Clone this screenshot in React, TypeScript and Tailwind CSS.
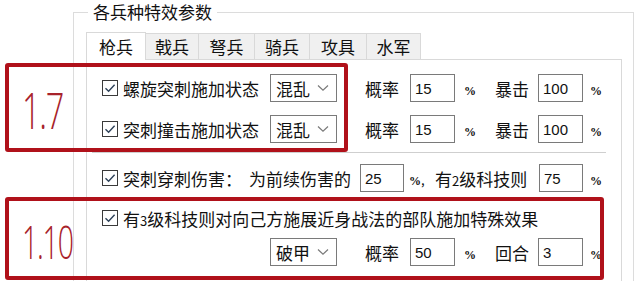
import React from "react";

const Check = () => (
  <span className="w-[16px] h-[16px] border border-[#3a3a3a] bg-white flex items-center justify-center shrink-0">
    <svg width="12" height="12" viewBox="0 0 12 12">
      <path d="M1.5 6.2 L4.6 9.2 L10.6 2.8" fill="none" stroke="#2d4058" strokeWidth="1.4" />
    </svg>
  </span>
);

const Combo = ({ value }: { value: string }) => (
  <div className="w-[67px] h-[28px] border border-[#7a7a7a] bg-white flex items-center justify-between pl-[5px] pr-[7px] shrink-0">
    <span>{value}</span>
    <svg width="12" height="8" viewBox="0 0 12 8">
      <path d="M1 1.5 L6 6.2 L11 1.5" fill="none" stroke="#7a7a7a" strokeWidth="1.2" />
    </svg>
  </div>
);

const Field = ({ value, w = 45 }: { value: string; w?: number }) => (
  <div
    className={`${w === 45 ? "w-[45px]" : "w-[44px]"} h-[28px] border border-[#7a7a7a] bg-white flex items-center pl-[4px] text-[15px] font-['Liberation_Sans',sans-serif] shrink-0`}
  >
    {value}
  </div>
);

const Pct = () => <span className="text-[12px] font-bold font-['Liberation_Serif',serif]">%</span>;

const RateRow = ({ combo, rate, label, value }: { combo: string; rate: string; label: string; value: string }) => (
  <>
    <Combo value={combo} />
    <span className="ml-[28px] w-[45px] shrink-0">概率</span>
    <Field value={rate} />
    <span className="w-[40px] pl-[9px] shrink-0">
      <Pct />
    </span>
    <span className="w-[43px] shrink-0">{label}</span>
    <Field value={value} />
    <span className="ml-[7px]">
      <Pct />
    </span>
  </>
);

const tabs = [
  { name: "枪兵", w: "w-[60px]" },
  { name: "戟兵", w: "w-[53px]" },
  { name: "弩兵", w: "w-[56px]" },
  { name: "骑兵", w: "w-[55px]" },
  { name: "攻具", w: "w-[57px]" },
  { name: "水军", w: "w-[54px]" },
];

export default function App() {
  return (
    <div className="w-[640px] h-[281px] overflow-hidden bg-white relative text-[17px] text-[#111] font-['Noto_Sans_CJK_SC',sans-serif] leading-none">
      <div className="ml-[73px] mt-[12px] w-[561px] h-[300px] border border-[#dcdcdc] relative pl-[12px] pt-[19px]">
        <span className="absolute left-[14px] top-[-11px] h-[20px] leading-[20px] px-[5px] bg-white">各兵种特效参数</span>

        <div className="flex items-end h-[27px]">
          {tabs.map((t, i) =>
            i === 0 ? (
              <div
                key={t.name}
                className={`${t.w} h-[28px] self-start -mb-px relative z-10 bg-white border border-b-0 border-[#d9d9d9] flex items-center justify-center`}
              >
                {t.name}
              </div>
            ) : (
              <div
                key={t.name}
                className={`${t.w} h-[26px] bg-[#f0f0f0] border-t border-r border-[#d9d9d9] flex items-center justify-center`}
              >
                {t.name}
              </div>
            )
          )}
        </div>

        <div className="w-[536px] h-[260px] border border-[#d9d9d9] bg-white pl-[15px] pt-[14px]">
          <div className="flex items-center h-[28px]">
            <div className="w-[168px] flex items-center shrink-0">
              <Check />
              <span className="ml-[5px]">螺旋突刺施加状态</span>
            </div>
            <RateRow combo="混乱" rate="15" label="暴击" value="100" />
          </div>
          <div className="flex items-center h-[28px] mt-[13px]">
            <div className="w-[168px] flex items-center shrink-0">
              <Check />
              <span className="ml-[5px]">突刺撞击施加状态</span>
            </div>
            <RateRow combo="混乱" rate="15" label="暴击" value="100" />
          </div>

          <div className="mt-[9px] ml-[-10px] w-[514px] h-px bg-[#cfcfcf]" />

          <div className="flex items-center h-[28px] mt-[11px]">
            <Check />
            <span className="ml-[5px] w-[126px] shrink-0">突刺穿刺伤害：</span>
            <span className="w-[111px] shrink-0">为前续伤害的</span>
            <Field value="25" w={44} />
            <span className="w-[31px] pl-[5px] shrink-0">
              <Pct />
              <span className="text-[13px]">,</span>
            </span>
            <span className="w-[104px] shrink-0">
              有<span className="text-[13px]">2</span>级科技则
            </span>
            <Field value="75" w={44} />
            <span className="ml-[7px]">
              <Pct />
            </span>
          </div>

          <div className="flex items-center h-[20px] mt-[16px]">
            <Check />
            <span className="ml-[5px]">
              有<span className="text-[13px]">3</span>级科技则对向己方施展近身战法的部队施加特殊效果
            </span>
          </div>

          <div className="flex items-center h-[28px] mt-[10px]">
            <div className="w-[168px] shrink-0" />
            <RateRow combo="破甲" rate="50" label="回合" value="3" />
          </div>
        </div>
      </div>

      <div className="absolute left-[5px] top-[63px] w-[343px] h-[89px] border-4 border-[#b0111a] rounded-[3px] flex items-center pl-[13px] pt-[4px]">
        <span className="inline-block origin-left scale-x-[0.65] text-[50px] font-light text-[#a8232b] font-['Open_Sans',sans-serif] tracking-[-2px]">1.7</span>
      </div>
      <div className="absolute left-[5px] top-[197px] w-[599px] h-[83px] border-4 border-[#b0111a] rounded-[3px] flex items-center pl-[13px] pt-[4px]">
        <span className="inline-block origin-left scale-x-[0.62] text-[46px] font-light text-[#a8232b] font-['Open_Sans',sans-serif] tracking-[-2px]">1.10</span>
      </div>
    </div>
  );
}
